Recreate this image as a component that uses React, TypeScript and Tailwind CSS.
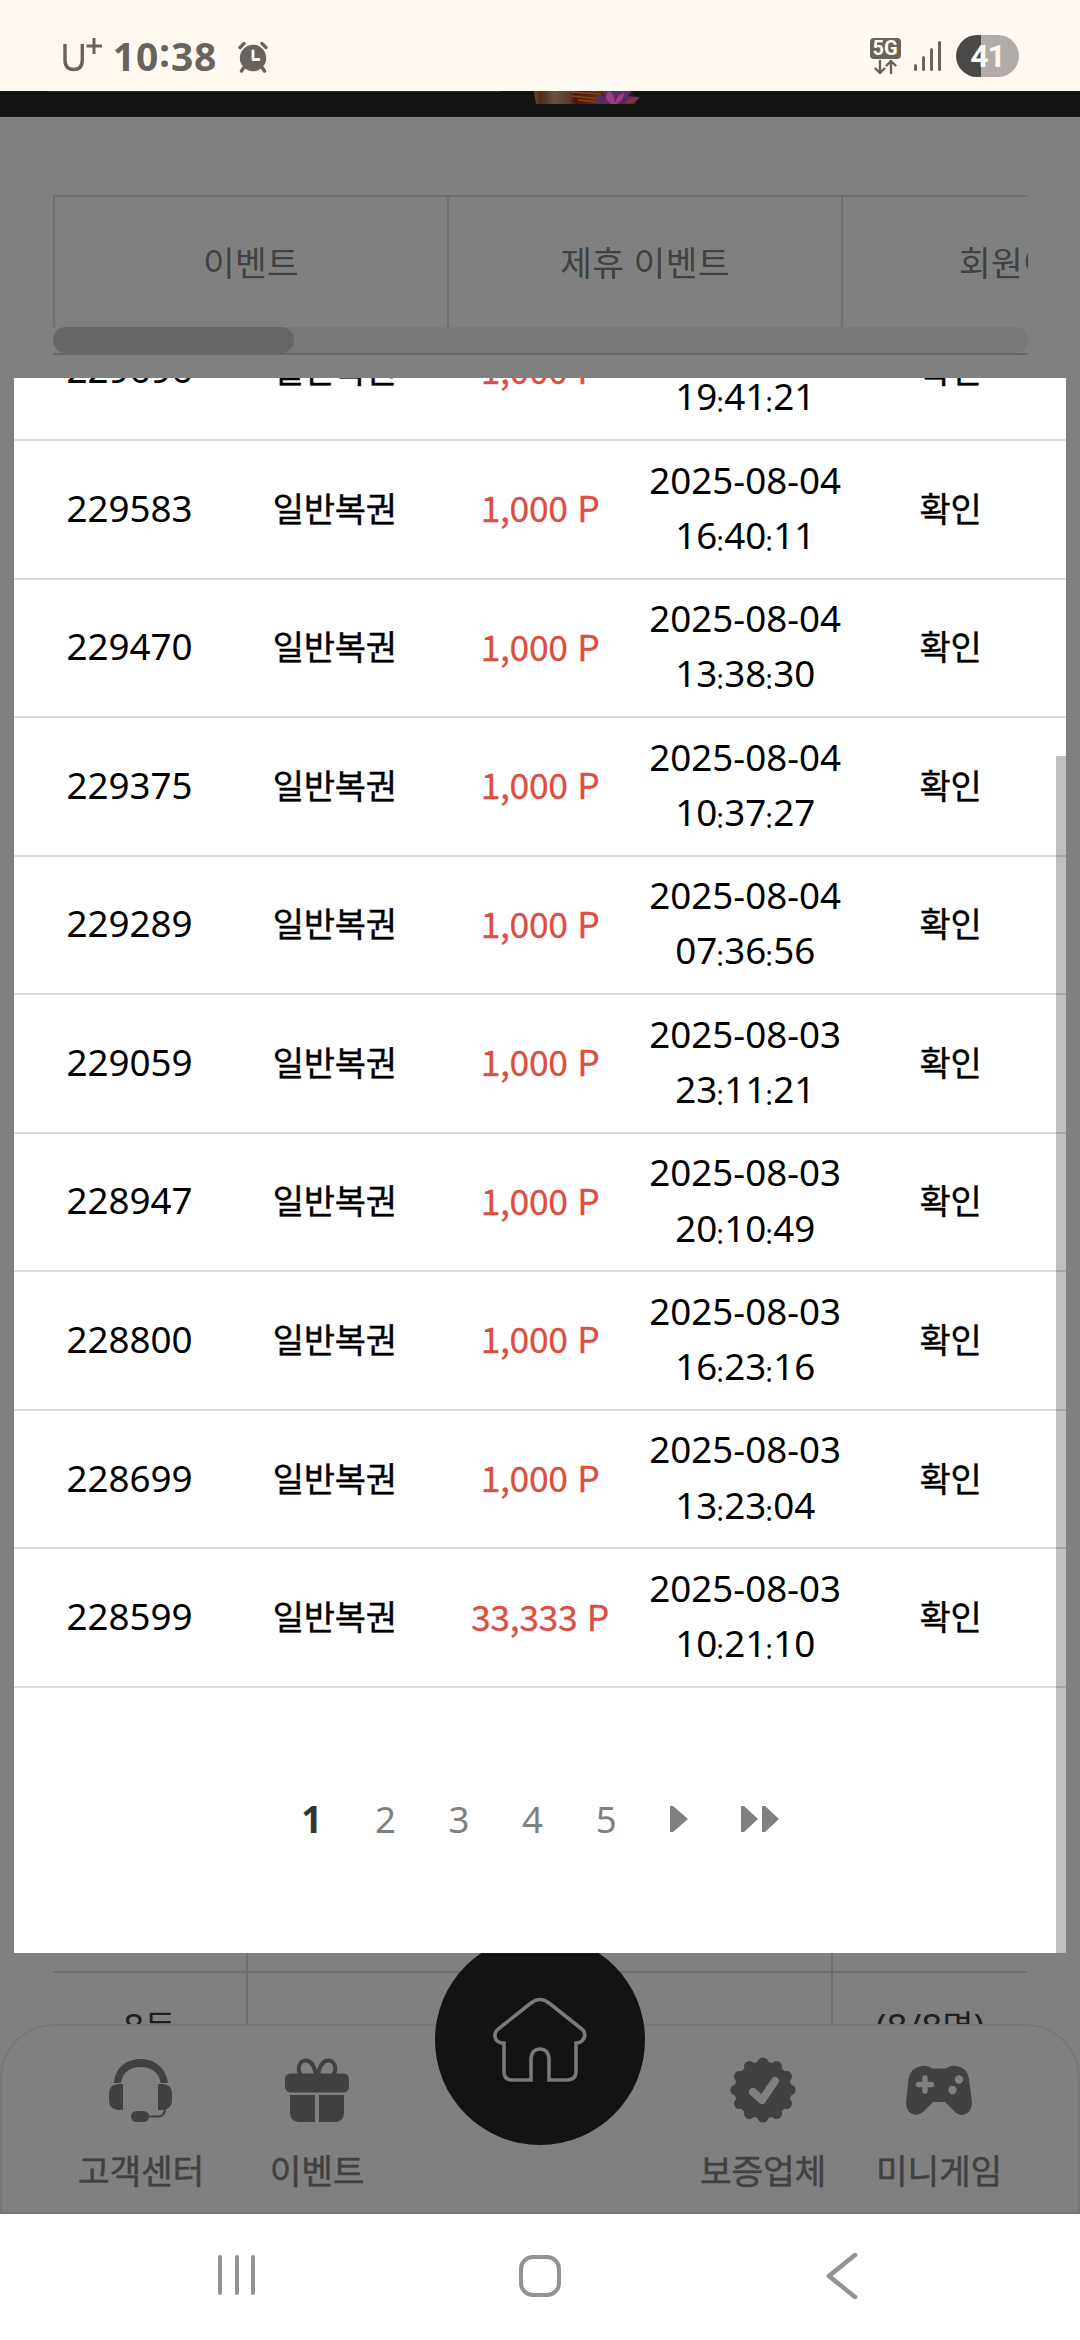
import { ChevronLeft } from "lucide-react";

type Entry = {
    id: string
    date: string
    time: string
    point?: string
}

const entries: Entry[] = [
    { id: "229696", date: "2025-08-04", time: "19:41:21" },
    { id: "229583", date: "2025-08-04", time: "16:40:11" },
    { id: "229470", date: "2025-08-04", time: "13:38:30" },
    { id: "229375", date: "2025-08-04", time: "10:37:27" },
    { id: "229289", date: "2025-08-04", time: "07:36:56" },
    { id: "229059", date: "2025-08-03", time: "23:11:21" },
    { id: "228947", date: "2025-08-03", time: "20:10:49" },
    { id: "228800", date: "2025-08-03", time: "16:23:16" },
    { id: "228699", date: "2025-08-03", time: "13:23:04" },
    { id: "228599", date: "2025-08-03", time: "10:21:10", point: "33,333 P" },
]

const StatusBar = () => {
    return (
        <header className="flex h-[91px] items-center justify-between bg-[#fff9f2] pr-[61px] pl-[62px] pt-[21px] text-[#68635f]">
            <div className="flex items-center">
                <svg className="-mt-[5px]" width="41" height="36" viewBox="0 0 41 36" fill="none" stroke="currentColor">
                    <path d="M3 8v16c0 6.500 3.500 9.500 8.700 9.500S20.300 30.500 20.300 24V8" strokeWidth="3.400" />
                    <path d="M32 2v16M24.500 10h15.500" strokeWidth="3" />
                </svg>
                <p className="flex w-[124px] justify-center font-['Open_Sans'] text-[39px] leading-[40px] font-bold tracking-[0.8px]">
                    10<span className="relative -top-[4px]">:</span>38
                </p>
                <svg className="ml-[10px]" width="32" height="33" viewBox="0 0 32 33" fill="none">
                    <circle cx="16" cy="18" r="13.200" fill="currentColor" />
                    <path d="M3 7.500l4-4M29 7.500l-4-4M6.500 28l-2 3M25.500 28l2 3" stroke="currentColor" strokeWidth="3.400" strokeLinecap="round" />
                    <path d="M16 11v8.500h6" stroke="#fff9f2" strokeWidth="2.800" strokeLinecap="round" strokeLinejoin="round" />
                </svg>
            </div>
            <div className="flex items-center">
                <div className="flex w-[31px] flex-col items-center">
                    <span className="flex h-[21px] w-[31px] items-center justify-center rounded-[4px] bg-[#68635f] font-[Roboto] text-[20px] leading-none font-bold text-[#fff9f2]">5G</span>
                    <svg width="24" height="16" viewBox="0 0 24 16" fill="none" stroke="currentColor" strokeWidth="2.400" strokeLinecap="round" strokeLinejoin="round">
                        <path d="M7 2v12M2.500 9.500L7 14l4.500-4.500M18 14V2M13.500 6.500L18 2l4.500 4.500" />
                    </svg>
                </div>
                <div className="ml-[13px] flex h-[30px] items-end gap-[4.500px]">
                    <span className="h-[7px] w-[3.500px] rounded-full bg-[#68635f]" />
                    <span className="h-[15px] w-[3.500px] rounded-full bg-[#68635f]" />
                    <span className="h-[23px] w-[3.500px] rounded-full bg-[#68635f]" />
                    <span className="h-[30px] w-[3.500px] rounded-full bg-[#68635f]" />
                </div>
                <div className="ml-[15px] flex h-[42px] w-[63px] items-center justify-center rounded-full bg-linear-to-r from-[#4b4946] from-40% to-[#b1acaa] to-40% font-[Roboto] text-[32px] leading-none font-bold tracking-[-1px] text-[#fff9f2]">
                    41
                </div>
            </div>
        </header>
    )
}

const Banner = () => {
    return (
        <div className="h-[26px] bg-[#131313]">
            <div className="ml-[48px] h-px w-[452px] bg-[#332f2b]" />
            <svg className="-mt-px ml-[533px]" width="107" height="13" viewBox="0 0 107 13">
                <defs>
                    <linearGradient id="robe">
                        <stop offset="0" stopColor="#7c4423" />
                        <stop offset="0.060" stopColor="#4e2c1c" />
                        <stop offset="0.200" stopColor="#6b5145" />
                        <stop offset="0.340" stopColor="#5a3b31" />
                        <stop offset="0.400" stopColor="#431a0c" />
                        <stop offset="0.600" stopColor="#5e2b12" />
                        <stop offset="1" stopColor="#2c1518" />
                    </linearGradient>
                </defs>
                <path d="M1 0h98l5 13H3z" fill="url(#robe)" />
                <path d="M38 1l30 2M39 5l28 3M45 9l20 2" stroke="#8a4218" strokeWidth="1.500" />
                <path d="M64 4l8 1-2-5h28l-3 5 12 1-6 7H66l-4-4z" fill="#5b2a63" />
                <path d="M78 13c-6-4-6-9-2-13 5 3 6 8 6 13 1-6 4-10 9-11 0 5-3 9-8 11z" fill="#9a3f84" />
                <path d="M92 12c3-4 7-5 13-6-2 5-6 7-13 6z" fill="#7d3a3c" />
            </svg>
        </div>
    )
}

const EventTabs = () => {
    return (
        <section className="mx-[53px] mt-[78px] w-[975px] overflow-hidden border-t-2 border-[#6f6f6f] text-[34.500px] tracking-[0.300px] text-[#414141]">
            <div className="flex h-[130px] w-[1182px] leading-[132px]">
                <div className="w-[394px] shrink-0 border-l-2 border-[#6f6f6f] text-center">이벤트</div>
                <div className="w-[394px] shrink-0 border-l-2 border-[#6f6f6f] text-center">제휴 이벤트</div>
                <div className="w-[394px] shrink-0 border-l-2 border-[#6f6f6f] text-center">회원이벤트</div>
            </div>
            <div className="h-[26px] rounded-full bg-[#797979]">
                <div className="h-full w-[241px] rounded-full bg-[#666666]" />
            </div>
            <div className="h-[2px] bg-[#676767]" />
        </section>
    )
}

// the colon sits lower and smaller than the digits round it
const Time = ({ value }: { value: string }) => {
    const [h, m, s] = value.split(":")
    const colon = <span className="relative top-[2px] inline-block w-[7px] text-center text-[27px] -indent-px">:</span>
    return <span className="block">{h}{colon}{m}{colon}{s}</span>
}

const EntryRow = ({ id, date, time, point = "1,000 P" }: Entry) => {
    return (
        <div className="grid h-[138.550px] shrink-0 grid-cols-5 items-center border-b-2 border-[#dcdcdc] px-[13px] text-center leading-[55.125px]">
            <span className="-mt-[2px]">{id}</span>
            <span className="text-[34px] tracking-[-0.300px] [-webkit-text-stroke:0.400px]">일반복권</span>
            <span className="-mt-[5px] font-['Noto_Sans_CJK_KR'] text-[35.500px] tracking-[-0.350px] [word-spacing:2px] text-[#dc4e41] [-webkit-text-stroke:0.300px]">{point}</span>
            <div>
                <span className="block">{date}</span>
                <Time value={time} />
            </div>
            <span className="text-[34px] tracking-[-0.300px] [-webkit-text-stroke:0.400px]">확인</span>
        </div>
    )
}

const Pagination = () => {
    return (
        <nav className="flex justify-center pt-[104px] text-[#808080]">
            <div className="flex leading-[55px]">
                <span className="w-[73.600px] text-center font-bold text-[#333333]">1</span>
                {["2", "3", "4", "5"].map((page) => (
                    <span key={page} className="w-[73.600px] text-center">{page}</span>
                ))}
            </div>
            <div className="flex items-center gap-[53px] pl-[27px] pr-[26px]">
                <svg width="18" height="26" viewBox="0 0 18 26" fill="currentColor">
                    <path d="M0 0h3l15 13L3 26H0z" />
                </svg>
                <svg width="38" height="26" viewBox="0 0 38 26" fill="currentColor">
                    <path d="M0 0h3l14 13L3 26H0zM21 0h3l14 13-14 13h-3z" />
                </svg>
            </div>
        </nav>
    )
}

const HistoryModal = () => {
    return (
        <div className="absolute top-[378px] left-[14px] h-[1575px] w-[1052px] overflow-hidden bg-white text-[36.750px] text-black">
            <div className="-mt-[75.550px] flex flex-col">
                {entries.map((entry) => (
                    <EntryRow key={entry.id} {...entry} />
                ))}
            </div>
            <Pagination />
            <div className="absolute right-0 bottom-0 h-[1197px] w-[10px] bg-black/25" />
        </div>
    )
}

const PrizeTable = () => {
    return (
        <section className="mx-[53px] mt-auto h-[261px] text-[36.750px] text-[#1f1f1f]">
            <div className="grid h-[18px] grid-cols-[193px_587px_1fr] border-b-0">
                <span />
                <span className="border-x-2 border-[#6f6f6f]" />
            </div>
            <div className="grid h-[243px] grid-cols-[193px_587px_1fr] border-t-2 border-[#6f6f6f] text-center">
                <span className="pt-[26px]">8<span className="text-[34px]">등</span></span>
                <span className="border-x-2 border-[#6f6f6f]" />
                <span className="pt-[26px]">(8/8<span className="text-[34px]">명</span>)</span>
            </div>
        </section>
    )
}

const HeadsetIcon = () => (
    <svg width="64" height="66" viewBox="0 0 64 66" fill="none">
        <path d="M5 26C6 11 17 2 31.500 2S57 11 59 26h-7.500C50 15 42 10 31.500 10S14 15 12 26z" fill="#414141" />
        <path d="M14 27H9q-9 1-9 9v7q0 9 9 10h5zM49 27h5q9 1 9 9v7q0 9-9 10h-5z" fill="#414141" />
        <path d="M56 51c0 6-2 8.500-7 8.500H37" stroke="#414141" strokeWidth="2.200" />
        <rect x="22" y="54" width="18" height="11" rx="5.500" fill="#414141" />
    </svg>
)

const GiftIcon = () => (
    <svg width="64" height="66" viewBox="0 0 64 66" fill="none">
        <path d="M31 18C29 7 25 3 20 3.500S11 12 16 18M33 18C35 7 39 3 44 3.500S53 12 48 18" stroke="#414141" strokeWidth="4" />
        <rect x="0" y="16.500" width="64" height="19" rx="5.500" fill="#414141" />
        <path d="M5 38h25v27H13q-8-1-8-9zM34 38h25v18q0 8-8 9H34z" fill="#414141" />
    </svg>
)

const BadgeIcon = () => {
    // twelve scallops round the disc
    const petals = Array.from({ length: 12 }, (_, i) => i * 30)
    return (
        <svg width="66" height="66" viewBox="0 0 66 66">
            <circle cx="33" cy="33" r="28.500" fill="#414141" />
            {petals.map((deg) => (
                <circle key={deg} cx="33" cy="6" r="5.600" fill="#414141" transform={`rotate(${deg} 33 33)`} />
            ))}
            <path d="M23 35l9 8 13-19" fill="none" stroke="#808080" strokeWidth="8" strokeLinecap="round" strokeLinejoin="round" />
        </svg>
    )
}

const GamepadIcon = () => (
    <svg width="66" height="66" viewBox="0 0 66 66">
        <path d="M16 9q6-1 10 2.500h14q4-3.500 10-2.500 11 1 13 13l3 23q0 11-9 13-5 0-8-3L39 45H27L17 55q-4 3-8 3-9-2-9-13l2.500-23Q5 10 16 9z" fill="#414141" />
        <path d="M19 21v13M12.500 27.500h13" stroke="#808080" strokeWidth="5.400" strokeLinecap="round" />
        <circle cx="53" cy="22.500" r="4.200" fill="#808080" />
        <circle cx="46.500" cy="33" r="4.200" fill="#808080" />
    </svg>
)

const NavItem = ({ label, children }: { label: string, children: React.ReactNode }) => {
    return (
        <div className="flex w-[176px] flex-col items-center pt-[31px]">
            {children}
            <span className="mt-[23px] text-[34.500px] leading-[50px] tracking-[-0.200px] [-webkit-text-stroke:0.500px]">{label}</span>
        </div>
    )
}

const BottomNav = () => {
    return (
        <div className="absolute top-[2024px] left-0 flex h-[190px] w-full justify-between rounded-t-[54px] border-2 border-[#777777] bg-[#808080] px-[51px] text-[#414141]">
            <div className="flex">
                <NavItem label="고객센터"><HeadsetIcon /></NavItem>
                <NavItem label="이벤트"><GiftIcon /></NavItem>
            </div>
            <div className="absolute -top-[91px] left-[433px] flex size-[210px] items-center justify-center rounded-full bg-[#131313]">
                <svg width="94" height="86" viewBox="0 0 94 86" fill="none" stroke="#7a7a7a" strokeWidth="3.600">
                    <path d="M38 83H18q-7-1-7-8V46H9C2 45 0 38 4 33L38 6q9-7 18 0l34 27q4 6-1 11-2 2-6 2v29q0 7-8 8H56V61q-1-9-9-9t-9 9z" />
                </svg>
            </div>
            <div className="flex">
                <NavItem label="보증업체"><BadgeIcon /></NavItem>
                <NavItem label="미니게임"><GamepadIcon /></NavItem>
            </div>
        </div>
    )
}

const SystemBar = () => {
    return (
        <footer className="flex h-[126px] justify-between bg-white pt-[41px] pr-[212px] pl-[218px] text-[#939393]">
            <div className="flex h-[40px] gap-[12.500px]">
                <span className="w-[4px] rounded-full bg-[#939393]" />
                <span className="w-[4px] rounded-full bg-[#939393]" />
                <span className="w-[4px] rounded-full bg-[#939393]" />
            </div>
            <div className="ml-[34px] size-[42px] rounded-[14px] border-4 border-[#939393]" />
            <ChevronLeft className="-mt-[21px] -mr-[26px] h-[84px] w-[104px]" strokeWidth="1.150" preserveAspectRatio="none" />
        </footer>
    )
}

export default function App() {
    return (
        <div className="relative flex h-[2340px] w-[1080px] flex-col overflow-hidden bg-[#808080] font-['Noto_Sans','Noto_Sans_CJK_KR',sans-serif]">
            <StatusBar />
            <Banner />
            <EventTabs />
            <PrizeTable />
            <BottomNav />
            <HistoryModal />
            <SystemBar />
        </div>
    )
}
